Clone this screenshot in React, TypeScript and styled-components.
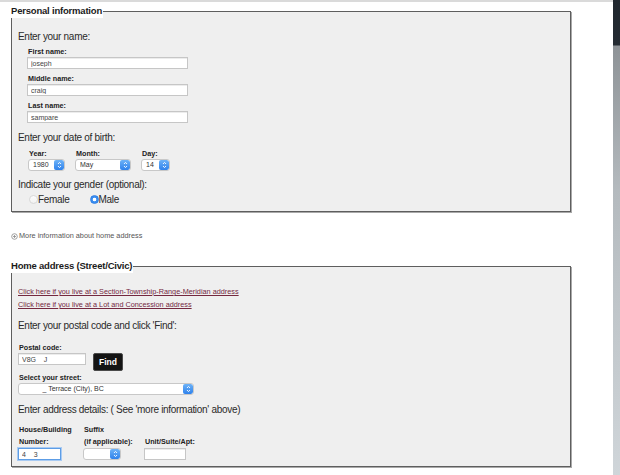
import React from 'react';
import styled, { createGlobalStyle } from 'styled-components';

const GlobalStyle = createGlobalStyle`
  html, body { margin: 0; padding: 0; background: #fff; }
  body {
    font-family: "Liberation Sans", Arial, Helvetica, sans-serif;
    color: #222;
    overflow: hidden;
  }
`;

const Shell = styled.div`
  display: flex;
  width: 620px;
  height: 475px;
  overflow: hidden;
`;

const Page = styled.main`
  flex: 1;
  border-top: 2px solid #dadada;
  padding: 2px 0 0 11px;
`;

const ScrollStrip = styled.div`
  width: 7px;
  flex: none;
  background: linear-gradient(#20272e 0, #252c33 45px, #8e9397 46px, #b4babe 40%, #cfd5d9 100%);
`;

const Box = styled.fieldset<{ $top?: number }>`
  box-sizing: border-box;
  width: 560px;
  min-width: 0;
  margin: ${(p) => p.$top ?? 0}px 0 0 0;
  padding: 0 0 6px 6px;
  border: 1px solid #5e5e5e;
  box-shadow: 1px 1px 0 #a9a9a9;
  background: #efefef;
`;

const Legend = styled.legend`
  margin-left: -7px;
  padding: 0 1px 0 0;
  background: #fff;
  font-weight: bold;
  font-size: 9.5px;
  letter-spacing: -0.2px;
  line-height: 14px;
  color: #1b1b1b;
`;

const Prompt = styled.div<{ $top: number }>`
  margin-top: ${(p) => p.$top}px;
  font-size: 10px;
  letter-spacing: -0.3px;
  line-height: 12px;
  color: #2a2a2a;
`;

const Group = styled.div`
  padding-left: 9px;
`;

const FieldLabel = styled.label<{ $top?: number }>`
  display: block;
  margin-top: ${(p) => p.$top ?? 5}px;
  padding-left: 1px;
  font-weight: bold;
  font-size: 7.2px;
  line-height: 10px;
  color: #222;
`;

const TextInput = styled.input<{ $w: number; $focus?: boolean }>`
  display: block;
  box-sizing: border-box;
  width: ${(p) => p.$w}px;
  height: 12px;
  margin: 0;
  padding: 0 3px;
  border: 1px solid ${(p) => (p.$focus ? '#5d9de6' : '#c6c6c6')};
  box-shadow: ${(p) => (p.$focus ? '0 0 0 1px #a9cbf3' : 'inset 0 1px 0 #ececec')};
  background: #fff;
  font-family: "Liberation Sans", Arial, sans-serif;
  font-size: 7px;
  color: #444;
  outline: none;
`;

const SelectShell = styled.span<{ $w: number }>`
  display: flex;
  box-sizing: border-box;
  width: ${(p) => p.$w}px;
  height: 12px;
  border: 1px solid #c8c8c8;
  border-radius: 3px;
  background: #fff;
  overflow: hidden;
`;

const NativeSelect = styled.select`
  flex: 1;
  min-width: 0;
  height: 100%;
  margin: 0;
  padding: 0 0 0 4px;
  border: none;
  background: transparent;
  appearance: none;
  -webkit-appearance: none;
  font-family: "Liberation Sans", Arial, sans-serif;
  font-size: 7px;
  line-height: 10px;
  color: #333;
  outline: none;
`;

const Stepper = styled.span`
  width: 10px;
  flex: none;
  display: flex;
  align-items: center;
  justify-content: center;
  background: linear-gradient(#6db2f7, #2f82ec);
  border-radius: 2px;
`;

const Arrows = () => (
  <svg width="5" height="8" viewBox="0 0 5 8">
    <path d="M1 3 L2.5 1.4 L4 3" fill="none" stroke="#fff" strokeWidth="0.9" />
    <path d="M1 5 L2.5 6.6 L4 5" fill="none" stroke="#fff" strokeWidth="0.9" />
  </svg>
);

const MacSelect = ({ w, value, children }: { w: number; value: string; children: React.ReactNode }) => (
  <SelectShell $w={w}>
    <NativeSelect defaultValue={value}>{children}</NativeSelect>
    <Stepper>
      <Arrows />
    </Stepper>
  </SelectShell>
);

const DateRow = styled.div`
  display: flex;
  gap: 10px;
  padding-left: 1px;
`;

const Column = styled.div`
  display: flex;
  flex-direction: column;
`;

const RadioRow = styled.div`
  display: flex;
  align-items: center;
  height: 12px;
  margin-top: 2px;
  padding-left: 2px;
`;

const RadioOption = styled.label`
  display: inline-flex;
  align-items: center;
  margin-right: 20px;
  font-size: 10px;
  letter-spacing: -0.3px;
  color: #2a2a2a;
`;

const Radio = styled.input`
  appearance: none;
  -webkit-appearance: none;
  box-sizing: border-box;
  width: 9px;
  height: 9px;
  margin: 0;
  border-radius: 50%;
  border: 1px solid #d8d8d8;
  background: linear-gradient(#fdfdfd, #f1f1f1);
  &:checked {
    border-color: #2f7fe6;
    background: radial-gradient(circle, #fff 0 1.6px, #3b8ef0 2.1px);
  }
`;

const InfoLink = styled.a`
  display: flex;
  align-items: center;
  gap: 1px;
  margin-top: 19px;
  font-size: 7.3px;
  line-height: 10px;
  color: #555;
  text-decoration: none;
`;

const RedLink = styled.a<{ $top: number }>`
  display: block;
  width: max-content;
  margin-top: ${(p) => p.$top}px;
  font-size: 7.3px;
  line-height: 10px;
  color: #74283f;
  text-decoration: underline;
`;

const PostalRow = styled.div`
  display: flex;
  align-items: flex-start;
  gap: 7px;
`;

const FindButton = styled.button`
  box-sizing: border-box;
  width: 30px;
  height: 18px;
  margin: 0;
  padding: 0;
  border: 1px solid #4a4a4a;
  border-radius: 2px;
  background: #141414;
  color: #fff;
  font-family: "Liberation Sans", Arial, sans-serif;
  font-weight: bold;
  font-size: 8.5px;
`;

const AddressGrid = styled.div`
  display: grid;
  grid-template-columns: 65px 61px auto;
  align-items: end;
  margin-top: 8px;
`;

const GridLabel = styled.span`
  padding-left: 1px;
  font-weight: bold;
  font-size: 7.2px;
  line-height: 12px;
  color: #222;
`;

const InfoIcon = () => (
  <svg width="7" height="7" viewBox="0 0 7 7">
    <circle cx="3.5" cy="3.5" r="2.8" fill="#fff" stroke="#8a8a8a" strokeWidth="0.8" />
    <path d="M3.5 2 V5 M2 3.5 H5" stroke="#8a8a8a" strokeWidth="0.8" />
  </svg>
);

export default function App() {
  return (
    <Shell>
      <GlobalStyle />
      <Page>
        <Box>
          <Legend>Personal information</Legend>
          <Prompt $top={13}>Enter your name:</Prompt>
          <Group>
            <FieldLabel $top={4}>First name:</FieldLabel>
            <TextInput $w={161} defaultValue="joseph" />
            <FieldLabel>Middle name:</FieldLabel>
            <TextInput $w={161} defaultValue="craig" />
            <FieldLabel>Last name:</FieldLabel>
            <TextInput $w={161} defaultValue="sampare" />
          </Group>
          <Prompt $top={9}>Enter your date of birth:</Prompt>
          <Group>
            <DateRow>
              <Column>
                <FieldLabel $top={5}>Year:</FieldLabel>
                <MacSelect w={37} value="1980">
                  <option>1980</option>
                </MacSelect>
              </Column>
              <Column>
                <FieldLabel $top={5}>Month:</FieldLabel>
                <MacSelect w={56} value="May">
                  <option>May</option>
                </MacSelect>
              </Column>
              <Column>
                <FieldLabel $top={5}>Day:</FieldLabel>
                <MacSelect w={29} value="14">
                  <option>14</option>
                </MacSelect>
              </Column>
            </DateRow>
          </Group>
          <Prompt $top={8}>Indicate your gender (optional):</Prompt>
          <Group>
            <RadioRow>
              <RadioOption>
                <Radio type="radio" name="gender" />
                Female
              </RadioOption>
              <RadioOption>
                <Radio type="radio" name="gender" defaultChecked />
                Male
              </RadioOption>
            </RadioRow>
          </Group>
        </Box>

        <InfoLink href="#">
          <InfoIcon />
          More information about home address
        </InfoLink>

        <Box $top={18}>
          <Legend>Home address (Street/Civic)</Legend>
          <RedLink href="#" $top={14}>
            Click here if you live at a Section-Township-Range-Meridian address
          </RedLink>
          <RedLink href="#" $top={3}>
            Click here if you live at a Lot and Concession address
          </RedLink>
          <Prompt $top={10}>Enter your postal code and click 'Find':</Prompt>
          <FieldLabel $top={11}>Postal code:</FieldLabel>
          <PostalRow>
            <TextInput $w={68} defaultValue="V8G    J" />
            <FindButton>Find</FindButton>
          </PostalRow>
          <FieldLabel $top={2}>Select your street:</FieldLabel>
          <MacSelect w={176} value="street">
            <option value="street">{'\u00a0\u00a0\u00a0\u00a0\u00a0\u00a0\u00a0\u00a0\u00a0\u00a0_ Terrace (City), BC'}</option>
          </MacSelect>
          <Prompt $top={9}>Enter address details: ( See 'more information' above)</Prompt>
          <AddressGrid>
            <GridLabel>
              House/Building
              <br />
              Number:
            </GridLabel>
            <GridLabel>
              Suffix
              <br />
              (if applicable):
            </GridLabel>
            <GridLabel>Unit/Suite/Apt:</GridLabel>
            <TextInput $w={43} $focus defaultValue="4    3" />
            <MacSelect w={38} value="">
              <option value=""></option>
            </MacSelect>
            <TextInput $w={42} defaultValue="" />
          </AddressGrid>
        </Box>
      </Page>
      <ScrollStrip />
    </Shell>
  );
}
